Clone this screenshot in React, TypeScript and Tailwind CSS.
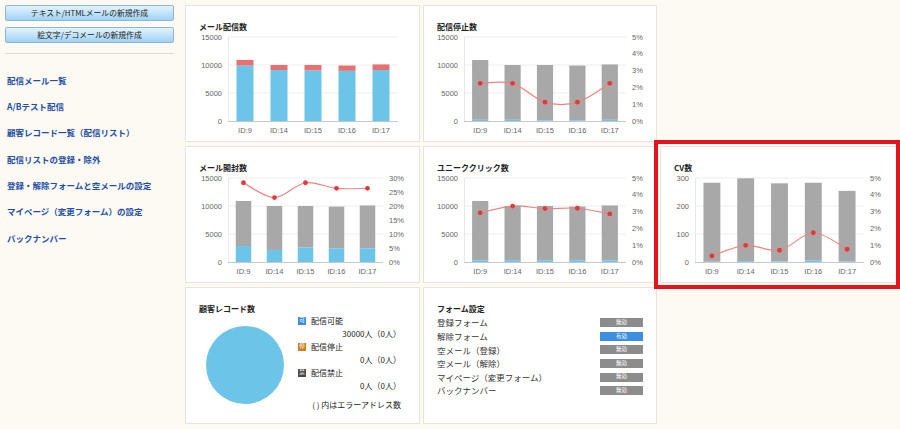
import React from 'react';

const ids = ['ID:9', 'ID:14', 'ID:15', 'ID:16', 'ID:17'];
const PLOT_TOP = 32;
const PLOT_BOTTOM = 116;
const AXIS_FONT = 'Liberation Sans, Arial, sans-serif';

type ChartProps = {
  title: string;
  width: number;
  plotLeft: number;
  plotRight: number;
  leftTicks: number[];
  leftMax: number;
  rightMax?: number;
  rightStep?: number;
  lower: number[];
  totals: number[];
  upperColor: string;
  line?: number[];
};

// catmull-rom -> bezier so the line bends like the original spline
const smoothPath = (pts: [number, number][]) => {
  let d = `M${pts[0][0]},${pts[0][1]}`;
  for (let i = 0; i < pts.length - 1; i++) {
    const p0 = pts[i - 1] || pts[i];
    const p1 = pts[i];
    const p2 = pts[i + 1];
    const p3 = pts[i + 2] || p2;
    const c1x = p1[0] + (p2[0] - p0[0]) / 6;
    const c1y = p1[1] + (p2[1] - p0[1]) / 6;
    const c2x = p2[0] - (p3[0] - p1[0]) / 6;
    const c2y = p2[1] - (p3[1] - p1[1]) / 6;
    d += ` C${c1x},${c1y} ${c2x},${c2y} ${p2[0]},${p2[1]}`;
  }
  return d;
};

const Card = ({ width, title, children }: { width: number; title: string; children: React.ReactNode }) => (
  <div className="flex h-[137px] flex-col border border-[#e6e4dc] bg-white" style={{ width }}>
    <div className="h-[25px] shrink-0 pl-[13px] pt-[16px] text-[8px] leading-[9px] font-bold text-[#222]">{title}</div>
    {children}
  </div>
);

const Chart = (p: ChartProps) => {
  const h = PLOT_BOTTOM - PLOT_TOP;
  const band = (p.plotRight - p.plotLeft) / 5;
  const barW = band * 0.5;
  const yL = (v: number) => PLOT_BOTTOM - (v / p.leftMax) * h;
  const yR = (v: number) => PLOT_BOTTOM - (v / (p.rightMax || 1)) * h;
  const cx = (i: number) => p.plotLeft + band * (i + 0.5);
  const rightLabels: number[] = [];
  if (p.rightMax && p.rightStep) {
    for (let v = 0; v <= p.rightMax + 0.001; v += p.rightStep) rightLabels.push(v);
  }
  const pts: [number, number][] = (p.line || []).map((v, i) => [cx(i), yR(v)]);

  return (
    <Card width={p.width} title={p.title}>
      <svg width={p.width - 2} height={110} viewBox={`1 26 ${p.width - 2} 110`} className="block">
        {p.leftTicks.map((t) => (
          <g key={t}>
            {t > 0 && <line x1={p.plotLeft} x2={p.plotRight} y1={yL(t)} y2={yL(t)} stroke="#eeeeee" strokeWidth={1} />}
            <text x={p.plotLeft - 6} y={yL(t) + 2.6} textAnchor="end" fontSize={7.5} fill="#666" fontFamily={AXIS_FONT}>
              {t}
            </text>
          </g>
        ))}
        {rightLabels.map((v) => (
          <text key={v} x={p.plotRight + 6} y={yR(v) + 2.6} fontSize={7.5} fill="#666" fontFamily={AXIS_FONT}>
            {Math.round(v)}%
          </text>
        ))}
        <line x1={p.plotLeft + 0.5} x2={p.plotLeft + 0.5} y1={PLOT_TOP} y2={PLOT_BOTTOM} stroke="#e8e8e8" />
        {p.totals.map((t, i) => {
          const x = cx(i) - barW / 2;
          const low = p.lower[i];
          return (
            <g key={i}>
              <rect x={x} y={yL(t)} width={barW} height={yL(low) - yL(t)} fill={p.upperColor} />
              <rect x={x} y={yL(low)} width={barW} height={PLOT_BOTTOM - yL(low)} fill="#6cc4e8" />
            </g>
          );
        })}
        <line x1={p.plotLeft} x2={p.plotRight} y1={PLOT_BOTTOM + 0.5} y2={PLOT_BOTTOM + 0.5} stroke="#c8c8c8" />
        {ids.map((id, i) => (
          <text key={id} x={cx(i)} y={128} textAnchor="middle" fontSize={7.5} fill="#666" fontFamily={AXIS_FONT}>
            {id}
          </text>
        ))}
        {pts.length > 0 && <path d={smoothPath(pts)} fill="none" stroke="#f08282" strokeWidth={1.2} />}
        {pts.map((pt, i) => (
          <circle key={i} cx={pt[0]} cy={pt[1]} r={2.4} fill="#e63838" />
        ))}
      </svg>
    </Card>
  );
};

const sideLinks = [
  '配信メール一覧',
  'A/Bテスト配信',
  '顧客レコード一覧（配信リスト）',
  '配信リストの登録・除外',
  '登録・解除フォームと空メールの設定',
  'マイページ（変更フォーム）の設定',
  'バックナンバー',
];

const totals = [10900, 10000, 10000, 9900, 10100];

const Sidebar = () => (
  <aside className="w-[185px] shrink-0 pl-[5px] pt-[5px]">
    <button className="flex h-[16px] w-[169px] items-center justify-center rounded-[2px] border border-[#8db6d4] bg-linear-to-b from-[#e4f4fe] to-[#9fd2f4] text-[7.8px] text-[#222]">
      テキスト/HTMLメールの新規作成
    </button>
    <button className="mt-[6px] flex h-[16px] w-[169px] items-center justify-center rounded-[2px] border border-[#8db6d4] bg-linear-to-b from-[#e4f4fe] to-[#9fd2f4] text-[7.8px] text-[#222]">
      絵文字/デコメールの新規作成
    </button>
    <div className="mt-[10px] h-px w-[169px] bg-[#dcdcd6]" />
    <ul className="mt-[13px]">
      {sideLinks.map((l) => (
        <li key={l} className="flex h-[26.3px] items-center pl-[2px] text-[8.5px] font-bold text-[#1f4ea6]">
          {l}
        </li>
      ))}
    </ul>
  </aside>
);

const LegendIcon = ({ ch, bg }: { ch: string; bg: string }) => (
  <span className={`flex h-[8px] w-[8px] items-center justify-center text-[5.5px] leading-none text-white ${bg}`}>{ch}</span>
);

const CustomerCard = () => (
  <Card width={235} title="顧客レコード数">
    <div className="flex text-[8px] text-[#222]">
      <svg width={112} height={110} viewBox="1 26 112 110" className="block shrink-0">
        <circle cx={60} cy={78} r={39} fill="#6cc4e8" />
      </svg>
      <div className="mt-[1px] w-[103px] leading-[13px]">
        <div className="flex items-center gap-[5px]">
          <LegendIcon ch="可" bg="bg-[#3b8ddb]" />
          <span>配信可能</span>
        </div>
        <div className="text-right">30000人（0人）</div>
        <div className="flex items-center gap-[5px]">
          <LegendIcon ch="停" bg="bg-[#cf7d22]" />
          <span>配信停止</span>
        </div>
        <div className="text-right">0人（0人）</div>
        <div className="flex items-center gap-[5px]">
          <LegendIcon ch="禁" bg="bg-[#4a4a4a]" />
          <span>配信禁止</span>
        </div>
        <div className="text-right">0人（0人）</div>
        <div className="mt-[6px] text-right">( ) 内はエラーアドレス数</div>
      </div>
    </div>
  </Card>
);

const forms: [string, boolean][] = [
  ['登録フォーム', false],
  ['解除フォーム', true],
  ['空メール（登録）', false],
  ['空メール（解除）', false],
  ['マイページ（変更フォーム）', false],
  ['バックナンバー', false],
];

const FormCard = () => (
  <Card width={234} title="フォーム設定">
    <div className="mt-[3px] px-[13px] text-[8.5px] text-[#333]">
      {forms.map(([name, on]) => (
        <div key={name} className="flex h-[13.6px] items-center justify-between">
          <span>{name}</span>
          <span
            className={`flex h-[9px] w-[43px] items-center justify-center text-[5.5px] leading-none text-white ${
              on ? 'bg-[#3c8fe0]' : 'bg-[#8c8c8c]'
            }`}
          >
            {on ? '有効' : '無効'}
          </span>
        </div>
      ))}
    </div>
  </Card>
);

export default function App() {
  return (
    <div className="flex h-[429px] w-[900px] bg-[#fcfaf3] font-['Noto_Sans_CJK_JP','Noto_Sans',sans-serif]">
      <Sidebar />
      <main className="grid grid-cols-[235px_234px_237px] grid-rows-[137px_137px_137px] gap-x-[3px] gap-y-[4px] pt-[5px]">
        <Chart
          title="メール配信数"
          width={235}
          plotLeft={43}
          plotRight={213}
          leftTicks={[0, 5000, 10000, 15000]}
          leftMax={15000}
          lower={[9880, 9100, 9000, 8950, 9100]}
          totals={totals}
          upperColor="#e97070"
        />
        <Chart
          title="配信停止数"
          width={234}
          plotLeft={41}
          plotRight={203}
          leftTicks={[0, 5000, 10000, 15000]}
          leftMax={15000}
          rightMax={5}
          rightStep={1}
          lower={[230, 220, 110, 110, 220]}
          totals={totals}
          upperColor="#a8a8a8"
          line={[2.24, 2.24, 1.12, 1.12, 2.24]}
        />
        <div />
        <Chart
          title="メール開封数"
          width={235}
          plotLeft={43}
          plotRight={198}
          leftTicks={[0, 5000, 10000, 15000]}
          leftMax={15000}
          rightMax={30}
          rightStep={5}
          lower={[2850, 2150, 2620, 2440, 2440]}
          totals={totals}
          upperColor="#a8a8a8"
          line={[28.3, 23, 28.3, 26.3, 26.3]}
        />
        <Chart
          title="ユニーククリック数"
          width={234}
          plotLeft={41}
          plotRight={203}
          leftTicks={[0, 5000, 10000, 15000]}
          leftMax={15000}
          rightMax={5}
          rightStep={1}
          lower={[310, 330, 320, 320, 290]}
          totals={totals}
          upperColor="#a8a8a8"
          line={[2.93, 3.33, 3.18, 3.2, 2.86]}
        />
        <div className="relative">
          <Chart
            title="CV数"
            width={237}
            plotLeft={35}
            plotRight={204}
            leftTicks={[0, 100, 200, 300]}
            leftMax={300}
            rightMax={5}
            rightStep={1}
            lower={[1, 3, 2, 5, 2]}
            totals={[283, 299, 281, 283, 254]}
            upperColor="#a8a8a8"
            line={[0.36, 0.99, 0.7, 1.74, 0.76]}
          />
          <div className="pointer-events-none absolute -top-[6px] -right-[3px] -bottom-[6px] -left-[6px] border-[4px] border-[#e5141b]" />
        </div>
        <CustomerCard />
        <FormCard />
      </main>
    </div>
  );
}
